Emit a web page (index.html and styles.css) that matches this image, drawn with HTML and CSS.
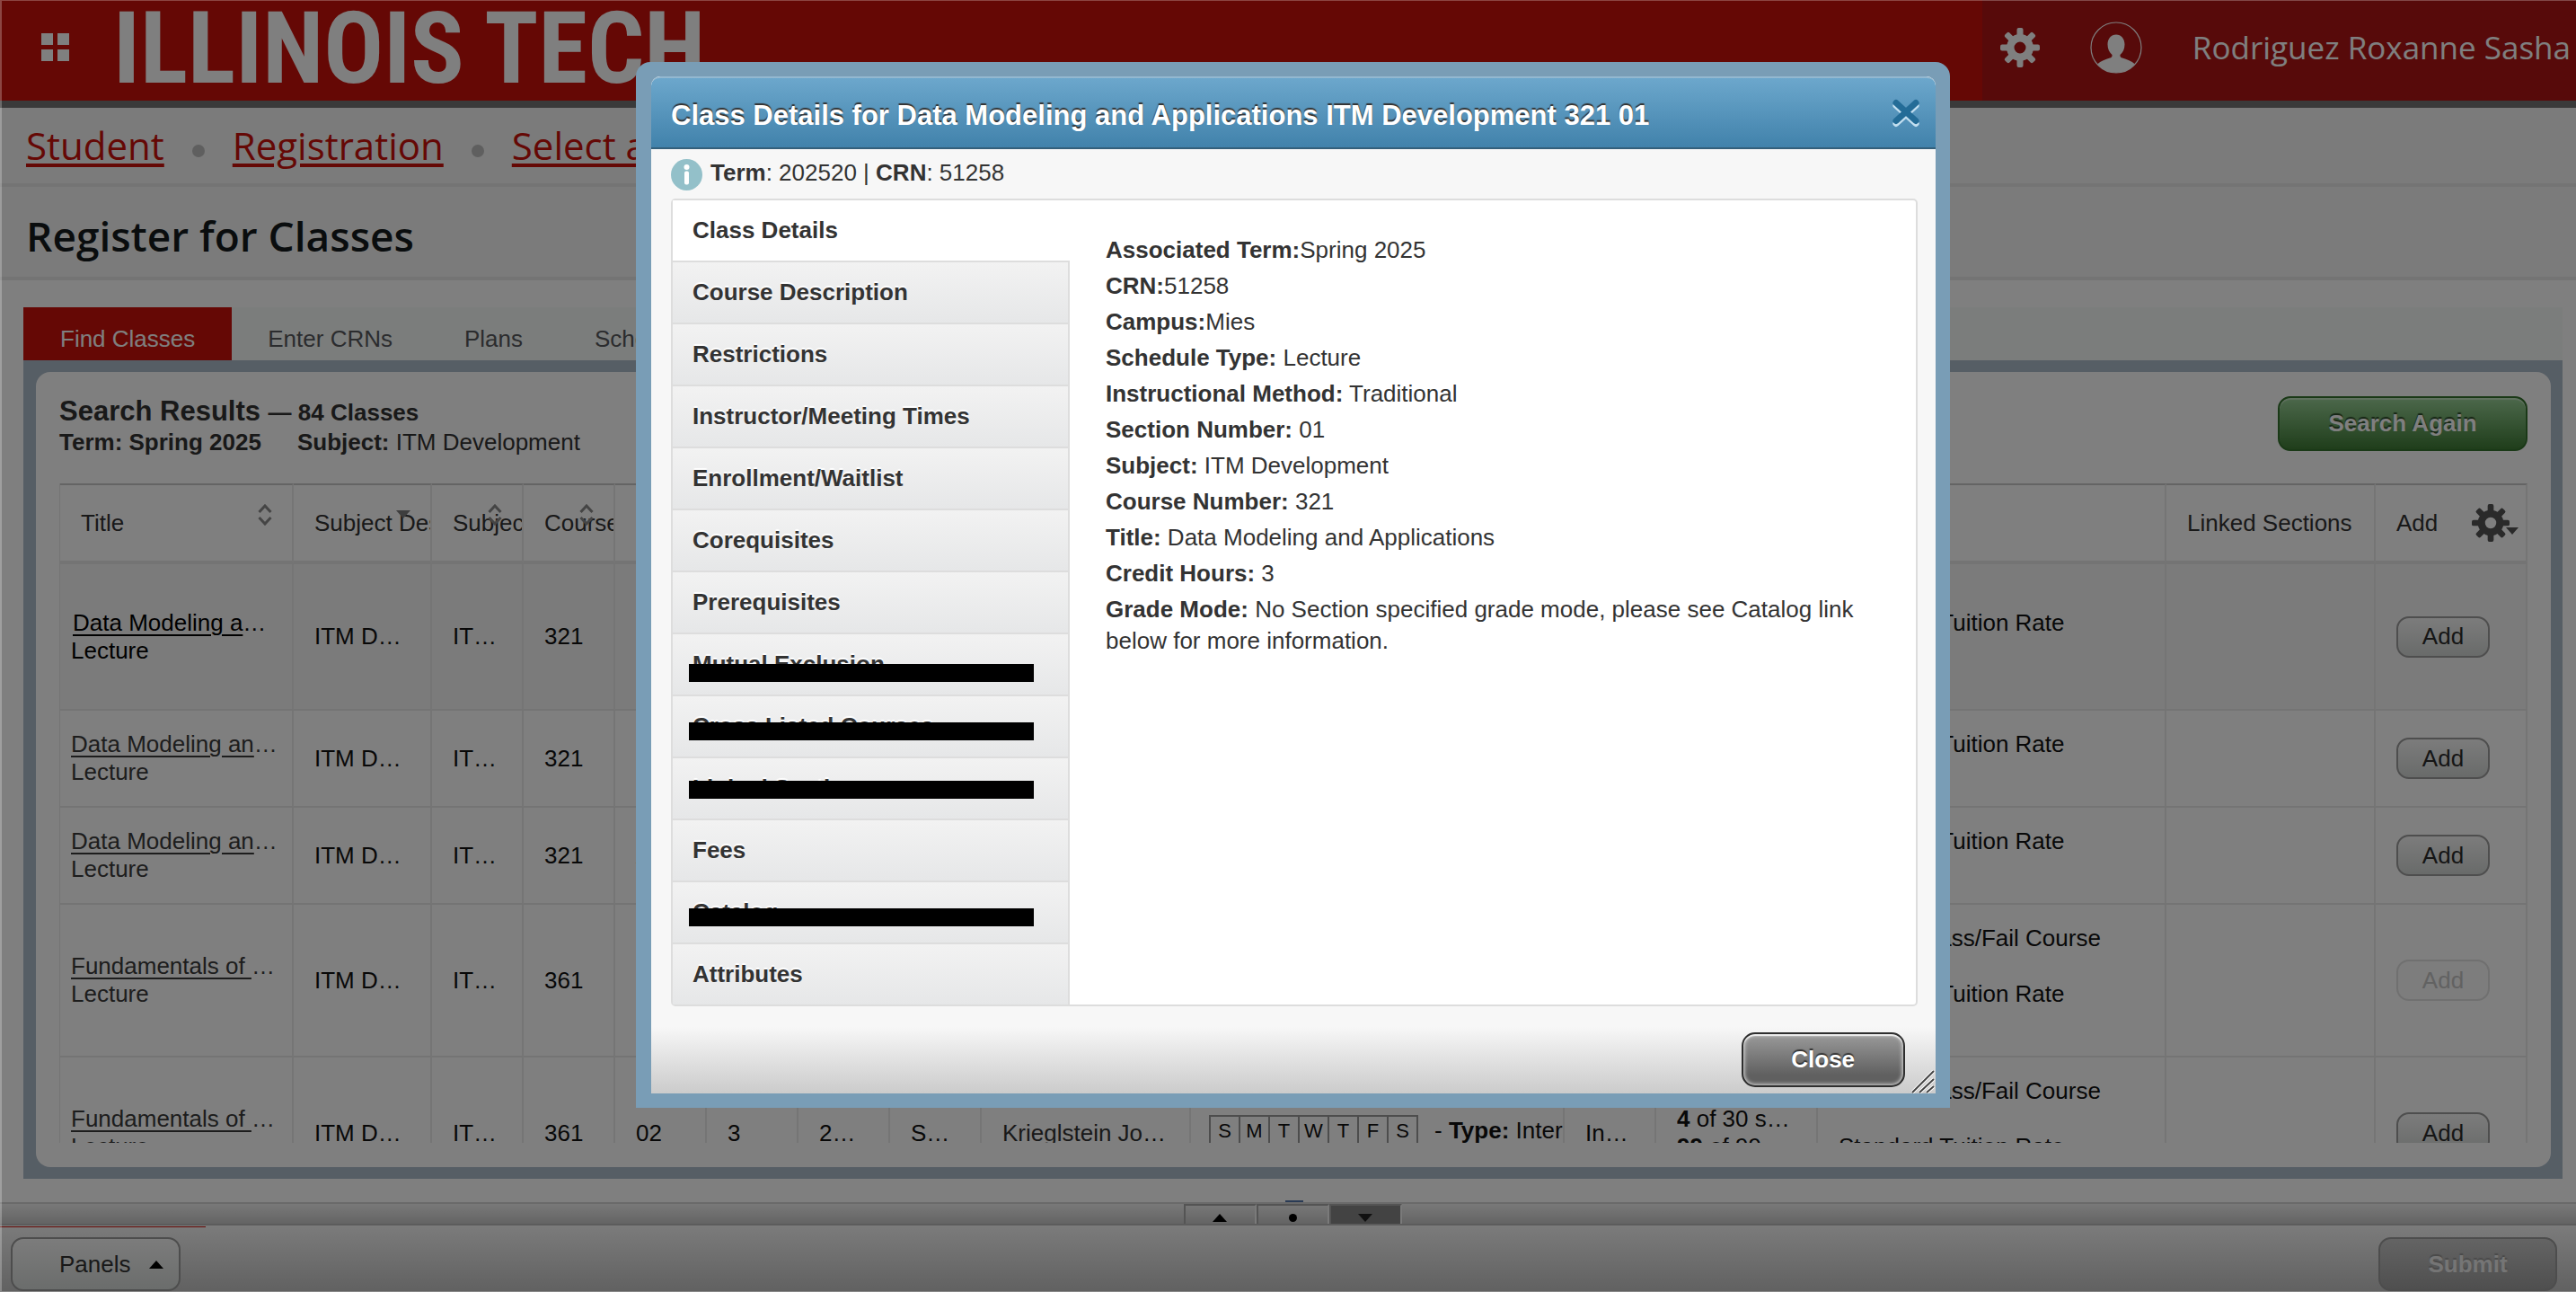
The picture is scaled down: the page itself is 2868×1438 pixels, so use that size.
FILE: index.html
```html
<!DOCTYPE html>
<html lang="en">
<head>
<meta charset="utf-8">
<title>Register for Classes</title>
<link rel="stylesheet" href="styles.css">
</head>
<body>
<svg class="defs" aria-hidden="true">
  <symbol id="gear" viewBox="-22 -22 44 44">
    <g fill="currentColor">
      <path fill-rule="evenodd" d="M0-15a15 15 0 1 0 0 30a15 15 0 1 0 0-30zM0-6.500a6.500 6.500 0 1 1 0 13a6.500 6.500 0 1 1 0-13z"/>
      <g id="teeth">
        <rect x="-3.500" y="-22" width="7" height="10" rx="2"/>
        <rect x="-3.500" y="12" width="7" height="10" rx="2"/>
        <rect x="-22" y="-3.500" width="10" height="7" rx="2"/>
        <rect x="12" y="-3.500" width="10" height="7" rx="2"/>
      </g>
      <use href="#teeth" transform="rotate(45)"/>
    </g>
  </symbol>
  <symbol id="sort" viewBox="0 0 16 24">
    <path d="M1.500 9L8 2l6.500 7M1.500 15L8 22l6.500-7" fill="none" stroke="currentColor" stroke-width="3"/>
  </symbol>
</svg>

<div class="app">
  <header class="topbar">
    <button class="menu" aria-label="Menu"><i></i><i></i><i></i><i></i></button>
    <div class="logo">ILLINOIS TECH</div>
    <div class="user">
      <svg class="user-gear" aria-hidden="true"><use href="#gear"/></svg>
      <svg class="avatar" viewBox="0 0 58 58" aria-hidden="true">
        <circle cx="29" cy="29" r="28" fill="none" stroke="currentColor" stroke-width="1.200"/>
        <path fill="currentColor" d="M29 14.500c-5.500 0-9.500 4.500-9.500 11 0 5 2 9 5 11.500.3 2-.5 3-2.500 3.600-5 1.400-10 3.400-14 6.900A28 28 0 0 0 50 47.500c-4-3.500-9-5.500-14-6.900-2-.6-2.800-1.600-2.500-3.600 3-2.500 5-6.500 5-11.500 0-6.500-4-11-9.500-11z"/>
      </svg>
      <span class="user-name">Rodriguez Roxanne Sasha</span>
    </div>
  </header>

  <nav class="crumbs" aria-label="Breadcrumb">
    <a href="#">Student</a><i></i><a href="#">Registration</a><i></i><a href="#">Select a Term</a>
  </nav>
  <h1 class="title">Register for Classes</h1>

  <div class="tabs">
    <button class="tab active">Find Classes</button>
    <button class="tab">Enter CRNs</button>
    <button class="tab">Plans</button>
    <button class="tab">Schedule and Options</button>
  </div>

  <main class="panel">
    <div class="results">
      <div class="results-head">
        <div>
          <h2>Search Results <small>— 84 Classes</small></h2>
          <p class="criteria"><b>Term: Spring 2025</b><span><b>Subject:</b> ITM Development</span></p>
        </div>
        <button class="search-again">Search Again</button>
      </div>
      <div class="grid-clip">
        <table class="grid">
          <colgroup>
            <col class="c260"><col class="c154"><col class="c102"><col class="c102"><col class="c102"><col class="c102"><col class="c102"><col class="c102"><col class="c233"><col class="c416"><col class="c102"><col class="c180"><col><col class="c233"><col class="c169">
          </colgroup>
          <thead>
            <tr>
              <th>Title<svg class="sort" aria-hidden="true"><use href="#sort"/></svg></th>
              <th>Subject Description<i class="sorted"></i></th>
              <th>Subject<svg class="sort" aria-hidden="true"><use href="#sort"/></svg></th>
              <th>Course Number<svg class="sort" aria-hidden="true"><use href="#sort"/></svg></th>
              <th>Section</th><th>Hours</th><th>CRN</th><th>Term</th><th>Instructor</th><th>Meeting Times</th><th>Campus</th><th>Status</th><th>Attribute</th>
              <th>Linked Sections</th>
              <th><span class="add-head">Add<button class="options" aria-label="Columns"><svg aria-hidden="true"><use href="#gear"/></svg><i></i></button></span></th>
            </tr>
          </thead>
          <tbody>
            <tr class="tall selected">
              <td class="name"><div class="focus"><a href="#">Data Modeling and Applications</a></div>Lecture</td>
              <td>ITM Development</td><td>ITMD</td><td>321</td><td>01</td><td>3</td><td>51258</td><td>Spring 2025</td><td></td><td></td><td></td><td></td>
              <td class="attrs"><p>Standard Tuition Rate</p></td><td></td><td><button class="add">Add</button></td>
            </tr>
            <tr>
              <td class="name"><div><a href="#">Data Modeling and Applications</a></div>Lecture</td>
              <td>ITM Development</td><td>ITMD</td><td>321</td><td>02</td><td>3</td><td></td><td>Spring 2025</td><td></td><td></td><td></td><td></td>
              <td class="attrs"><p>Standard Tuition Rate</p></td><td></td><td><button class="add">Add</button></td>
            </tr>
            <tr>
              <td class="name"><div><a href="#">Data Modeling and Applications</a></div>Lecture</td>
              <td>ITM Development</td><td>ITMD</td><td>321</td><td>A01</td><td>3</td><td></td><td>Spring 2025</td><td></td><td></td><td></td><td></td>
              <td class="attrs"><p>Standard Tuition Rate</p></td><td></td><td><button class="add">Add</button></td>
            </tr>
            <tr class="tall">
              <td class="name"><div><a href="#">Fundamentals of Web Development</a></div>Lecture</td>
              <td>ITM Development</td><td>ITMD</td><td>361</td><td>01</td><td>3</td><td></td><td>Spring 2025</td><td></td><td></td><td></td><td></td>
              <td class="attrs"><p>Graded Pass/Fail Course</p><p>Standard Tuition Rate</p></td><td></td><td><button class="add" disabled>Add</button></td>
            </tr>
            <tr class="tall">
              <td class="name"><div><a href="#">Fundamentals of Web Development</a></div>Lecture</td>
              <td>ITM Development</td><td>ITMD</td><td>361</td><td>02</td><td>3</td><td>20250</td><td>Spring 2025</td>
              <td><a class="plain" href="#">Krieglstein Joseph</a></td>
              <td class="meeting"><div><span class="days"><i>S</i><i>M</i><i>T</i><i>W</i><i>T</i><i>F</i><i>S</i></span><span>- <b>Type:</b> Internet</span></div></td>
              <td>Inmet</td>
              <td><div class="cut"><b>4</b> of 30 seats remain</div><b>99</b> of 99</td>
              <td class="attrs"><p>Graded Pass/Fail Course</p><p>Standard Tuition Rate</p></td><td></td><td><button class="add">Add</button></td>
            </tr>
          </tbody>
        </table>
      </div>
    </div>
  </main>

  <div class="splitter">
    <button aria-label="Expand up"><i class="tri up"></i></button><button class="mid" aria-label="Reset"><i class="dot"></i></button><button class="off" aria-label="Collapse down"><i class="tri down"></i></button>
  </div>
  <footer class="actions">
    <button class="panels">Panels<i class="tri up"></i></button>
    <button class="submit" disabled>Submit</button>
  </footer>
</div>

<div class="overlay"></div>

<section class="dialog" role="dialog" aria-labelledby="dlg-title">
  <div class="dialog-body">
    <header class="dialog-head">
      <h2 id="dlg-title">Class Details for Data Modeling and Applications ITM Development 321 01</h2>
      <button class="x" aria-label="Close dialog">
        <svg viewBox="0 0 34 34" aria-hidden="true">
          <path d="M6 8.500l22 20M28 8.500l-22 20" stroke="#c3dff0" stroke-width="7" stroke-linecap="round"/>
          <path d="M6 5.500l22 20M28 5.500l-22 20" stroke="#246c97" stroke-width="7" stroke-linecap="round"/>
        </svg>
      </button>
    </header>
    <div class="dialog-info">
      <svg viewBox="0 0 35 35" aria-hidden="true"><circle cx="17.500" cy="17.500" r="17.500" fill="#93c0c9"/><circle cx="17.500" cy="9" r="3" fill="#fff"/><rect x="15" y="13.500" width="5" height="15" rx="2" fill="#fff"/></svg>
      <p><b>Term</b>: 202520 | <b>CRN</b>: 51258</p>
    </div>
    <div class="details">
      <nav class="side">
        <button class="current">Class Details</button>
        <button>Course Description</button>
        <button>Restrictions</button>
        <button>Instructor/Meeting Times</button>
        <button>Enrollment/Waitlist</button>
        <button>Corequisites</button>
        <button>Prerequisites</button>
        <button class="bar bar-low">Mutual Exclusion</button>
        <button class="bar bar-mid">Cross Listed Courses</button>
        <button class="bar bar-high">Linked Sections</button>
        <button>Fees</button>
        <button class="bar bar-mid">Catalog</button>
        <button>Attributes</button>
      </nav>
      <div class="facts">
        <p><b>Associated Term:</b>Spring 2025</p>
        <p><b>CRN:</b>51258</p>
        <p><b>Campus:</b>Mies</p>
        <p><b>Schedule Type:</b> Lecture</p>
        <p><b>Instructional Method:</b> Traditional</p>
        <p><b>Section Number:</b> 01</p>
        <p><b>Subject:</b> ITM Development</p>
        <p><b>Course Number:</b> 321</p>
        <p><b>Title:</b> Data Modeling and Applications</p>
        <p><b>Credit Hours:</b> 3</p>
        <p><b>Grade Mode:</b> No Section specified grade mode, please see Catalog link below for more information.</p>
      </div>
    </div>
    <footer class="dialog-foot">
      <button class="close">Close</button>
      <svg class="grip" viewBox="0 0 26 26" aria-hidden="true"><path d="M1 25L25 1M9 25L25 10M17 25L25 18" stroke="#fff" stroke-width="4"/><path d="M1 25L25 1M9 25L25 10M17 25L25 18" stroke="#444" stroke-width="2"/></svg>
    </footer>
  </div>
</section>
</body>
</html>
```

FILE: styles.css
```css
* { box-sizing: border-box; }

body {
  margin: 0;
  background: #fff;
  color: #333;
  font: 26px/31px "Liberation Sans", Arial, sans-serif;
  overflow: hidden;
}

h1, h2, p { margin: 0; }
button { font: inherit; color: inherit; border: 0; padding: 0; background: none; }
.defs { position: absolute; width: 0; height: 0; }

.app { display: flex; flex-direction: column; height: 100vh; }

/* Top bar */
.topbar {
  display: flex;
  align-items: center;
  flex: none;
  height: 120px;
  padding-left: 46px;
  background: #cb100a;
  border-bottom: 8px solid #747474;
  color: #fff;
}
.menu { display: grid; grid-template-columns: 13px 13px; gap: 5px; margin: 0 49px 8px 0; }
.menu i { height: 13px; background: #fff; }
.logo {
  flex: 1;
  font: bold 111px/104px "Roboto Condensed", Roboto, sans-serif;
  margin-bottom: 4px;
  white-space: nowrap;
}
.user {
  display: flex;
  align-items: center;
  align-self: stretch;
  padding: 0 6px 6px 20px;
  background: #ae1414;
  font: 35px/50px "Open Sans", "Noto Sans", sans-serif;
}
.user-gear { width: 44px; height: 44px; }
.avatar { width: 58px; height: 58px; margin: 0 56px; }

/* Breadcrumb and title */
.crumbs {
  display: flex;
  align-items: center;
  flex: none;
  height: 88px;
  padding-left: 29px;
  background: #f7f7f7;
  border-bottom: 4px solid #e9e9e9;
  font: 42px/58px "Open Sans", "Noto Sans", sans-serif;
}
.crumbs a { color: #cb100a; text-decoration-thickness: 4px; text-underline-offset: 4px; }
.crumbs i { width: 14px; height: 14px; margin: 12px 31px 0; border-radius: 50%; background: #bebebe; }
.title {
  flex: none;
  height: 104px;
  padding: 10px 0 0 29px;
  background: #f7f7f7;
  border-bottom: 4px solid #e9e9e9;
  color: #151a1c;
  font: 600 46px/88px "Open Sans", "Noto Sans", sans-serif;
}

/* Page tabs */
.tabs { display: flex; flex: none; margin: 30px 15px 0 26px; background: #f7fbf9; }
.tab { padding: 11px 40px 0; line-height: 48px; color: #57595d; }
.tab.active { padding: 11px 41px 0; background: #cb100a; color: #fff; }

/* Results panel */
.panel {
  display: flex;
  flex: 1;
  min-height: 0;
  margin: 0 15px 26px 26px;
  padding: 13px 13px 13px 14px;
  background: #adbcca;
}
.results {
  display: flex;
  flex-direction: column;
  flex: 1;
  min-width: 0;
  padding: 27px 26px;
  border-radius: 16px;
  background: #fff;
}
.results-head { display: flex; justify-content: space-between; align-items: flex-start; margin-bottom: 30px; }
.results-head h2 { font-size: 31px; line-height: 34px; }
.results-head small { font-size: 26px; }
.criteria { line-height: 32px; }
.criteria span { margin-left: 40px; }
.search-again {
  width: 278px;
  height: 61px;
  border: 2px solid #34722e;
  border-radius: 14px;
  background: linear-gradient(#98d096, #3f7c36);
  box-shadow: inset 0 2px 1px rgba(255, 255, 255, .4);
  color: #fff;
  font-weight: bold;
  text-shadow: 0 -2px 1px #2d4a2a;
}

/* Class grid */
.grid-clip { flex: 1; min-height: 0; overflow: hidden; }
.grid { width: 100%; table-layout: fixed; border-collapse: separate; border-spacing: 0; border-left: 1px solid #e8e8e8; }
.c260 { width: 260px; }
.c154 { width: 154px; }
.c102 { width: 102px; }
.c180 { width: 180px; }
.c233 { width: 233px; }
.c416 { width: 416px; }
.c169 { width: 169px; }
.grid th, .grid td {
  overflow: hidden;
  padding: 0 24px 0 23px;
  border-right: 2px solid #eaeaea;
  border-bottom: 2px solid #e8e8e8;
  text-align: left;
  text-overflow: ellipsis;
  white-space: nowrap;
}
.grid th {
  position: relative;
  height: 90px;
  padding-right: 0;
  border-top: 2px solid #c9c9c9;
  border-bottom-width: 4px;
  font-weight: normal;
  text-overflow: clip;
}
.grid td { height: 108px; color: #111; }
.grid .tall td { height: 170px; }
.grid .selected td { height: 163px; background: #f7f7f7; }
.grid .name { padding: 0 13px 0 12px; color: #3a3a3a; }
.grid .selected .name { color: #000; }
.name div { overflow: hidden; text-overflow: ellipsis; }
.name .focus { padding: 0 10px 0 2px; }
.name a { color: inherit; text-underline-offset: 4px; text-decoration-thickness: 2px; }
.plain { color: #333; text-decoration: none; }
.sort { position: absolute; top: 21px; right: 22px; width: 16px; height: 24px; color: #8a8a8a; }
.sorted {
  position: absolute;
  top: 28px;
  right: 22px;
  border: 8px solid transparent;
  border-top: 9px solid #7c7c7c;
  border-bottom: 0;
}
.add-head { display: flex; align-items: center; justify-content: space-between; padding-right: 8px; }
.options { display: flex; align-items: flex-end; color: #555; }
.options svg { width: 42px; height: 42px; }
.options i { margin: 0 0 8px -4px; border: 7px solid transparent; border-top: 8px solid #555; border-bottom: 0; }
.attrs p { margin-bottom: 31px; }
.cut { overflow: hidden; text-overflow: ellipsis; }
.grid .meeting { padding: 0 0 0 20px; text-overflow: clip; }
.meeting div { display: flex; align-items: center; gap: 18px; padding-bottom: 6px; }
.days { display: flex; border: 2px solid #9a9a9a; font-size: 22px; }
.days i { width: 33px; border-left: 2px solid #9a9a9a; font-style: normal; text-align: center; }
.days i:first-child { width: 31px; border-left: 0; }
.add {
  display: block;
  width: 104px;
  height: 46px;
  border: 2px solid #9c9c9c;
  border-radius: 14px;
  background: linear-gradient(#f8f8f8, #d2d6d4);
  color: #2c2c2c;
}
.add:disabled { border-color: #e0e0e0; background: #fafafa; color: #c4c4c4; }

/* Splitter */
.splitter {
  position: relative;
  display: flex;
  justify-content: center;
  flex: none;
  height: 26px;
  padding-left: 10px;
  border-top: 2px solid #d4d4d4;
  border-bottom: 2px solid #b8b8b8;
  background: linear-gradient(#f2f2f2, #c8c8c8);
}
.splitter button {
  display: flex;
  align-items: flex-end;
  justify-content: center;
  width: 81px;
  padding-bottom: 2px;
  border: 2px solid #a8a8a8;
  border-right-color: #f4f4f4;
  border-bottom: 0;
}
.splitter .off { background: #868686; }
.splitter .mid { position: relative; }
.mid::before, .mid::after { content: ""; position: absolute; left: 30px; width: 20px; height: 2px; }
.mid::before { top: -6px; background: #5577aa; }
.mid::after { bottom: -4px; left: 36px; width: 10px; background: #111; }
.tri { border: 8px solid transparent; }
.tri.up { border-top: 0; border-bottom: 9px solid #000; }
.tri.down { border-bottom: 0; border-top: 9px solid #222; }
.dot { width: 9px; height: 9px; border-radius: 50%; background: #000; }

/* Action bar */
.actions {
  position: relative;
  display: flex;
  justify-content: space-between;
  align-items: flex-end;
  flex: none;
  height: 74px;
  padding: 0 21px 1px 12px;
  border-top: 1px solid #f8f8f8;
  background: linear-gradient(#f6f6f6, #c2c2c2);
}
.actions::before { content: ""; position: absolute; top: 0; left: 0; width: 229px; height: 1px; background: #cb100a; }
.actions button { height: 60px; border: 2px solid #9a9a9a; border-radius: 14px; }
.panels {
  display: flex;
  align-items: center;
  gap: 20px;
  width: 189px;
  padding-left: 52px;
  background: linear-gradient(#f8f8f8, #d6dad8);
}
.submit {
  width: 199px;
  background: linear-gradient(#c8c8c8, #9e9e9e);
  color: #ebebeb;
  font-weight: bold;
  text-shadow: 0 -2px 1px #949494;
}

/* Modal layer */
.overlay {
  position: fixed;
  inset: 0;
  background: rgba(0, 0, 0, .5);
  border: 0 solid rgba(255, 255, 255, .25);
  border-width: 1px 0 1px 2px;
}
.dialog {
  position: absolute;
  top: 69px;
  left: 708px;
  width: 51%;
  padding: 16px 16px 16px 17px;
  border-radius: 16px 16px 0 0;
  background: #799db6;
}
.dialog-body { border-radius: 10px 10px 0 0; background: #f7f7f7; overflow: hidden; }
.dialog-head {
  display: flex;
  align-items: center;
  justify-content: space-between;
  height: 81px;
  padding: 0 16px 0 22px;
  border-top: 2px solid #93b8d0;
  border-bottom: 2px solid #335f7a;
  border-radius: 10px 10px 0 0;
  background: linear-gradient(#6ca7cc, #4182ab);
  color: #fff;
}
.dialog-head h2 { font-size: 31px; line-height: 36px; padding-top: 7px; text-shadow: 0 -2px 1px #333; white-space: nowrap; }
.x { display: flex; }
.x svg { width: 34px; height: 34px; }
.dialog-info { display: flex; gap: 9px; padding: 11px 22px 9px; }
.dialog-info svg { width: 35px; height: 35px; }
.details {
  display: flex;
  margin: 0 20px 0 22px;
  border: 2px solid #ddd;
  border-radius: 5px;
  background: #fff;
}
.side { display: flex; flex-direction: column; flex: none; width: 442px; }
.side button {
  position: relative;
  height: 69px;
  padding: 0 22px;
  border: 0 solid #ddd;
  border-width: 2px 2px 0 0;
  background: linear-gradient(#f2f2f2, #e6e7e8);
  font-weight: bold;
  text-align: left;
  text-shadow: 0 -2px 1px #fff;
}
.side .current { height: 67px; border: 0; background: #fff; }
.bar::after { content: ""; position: absolute; left: 18px; width: 384px; height: 20px; background: #000; }
.bar-low::after { top: 33px; }
.bar-mid::after { top: 29px; }
.bar-high::after { top: 25px; }
.facts {
  display: flex;
  flex-direction: column;
  flex: 1;
  gap: 5px;
  padding: 38px 30px 0 40px;
  line-height: 35px;
}
.dialog-foot {
  position: relative;
  display: flex;
  justify-content: flex-end;
  margin-top: 23px;
  padding: 6px 34px 7px;
  background: linear-gradient(#f7f7f7, #cbcbcb);
}
.close {
  width: 182px;
  height: 61px;
  border: 2px solid #2e2e2e;
  border-radius: 15px;
  background: linear-gradient(#9a9a9a, #606060 80%);
  box-shadow: inset 0 0 4px 1px #ddd, inset 0 2px 1px #fff;
  color: #fff;
  font-weight: bold;
  text-shadow: 0 -2px 1px #333;
}
.grip { position: absolute; right: 1px; bottom: 0; width: 26px; height: 26px; }
```
